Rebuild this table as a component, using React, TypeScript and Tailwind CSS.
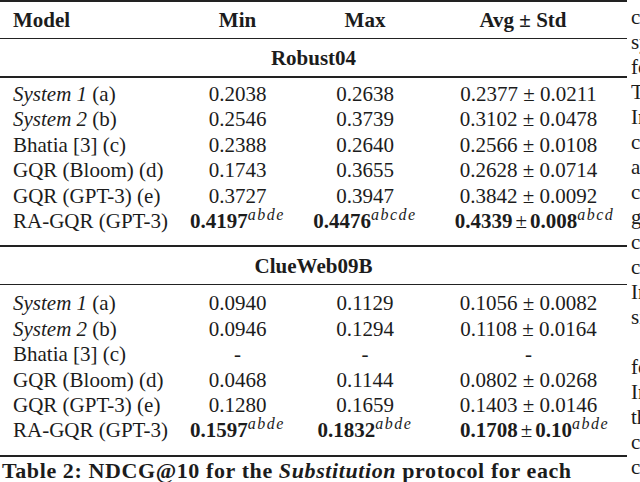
import React from 'react';

type Cell = React.ReactNode;

interface RowData {
  model: Cell;
  min: Cell;
  max: Cell;
  avg: Cell;
}

const GRID = 'grid grid-cols-[175px_125px_130px_197px]';

const Sup = ({ children }: { children: React.ReactNode }) => (
  <sup className="text-[16px] italic font-normal tracking-[1.5px] top-[-8px]">{children}</sup>
);

// the ± in the bold rows sits tighter than in the plain ones
const PM = () => <span className="font-normal px-[3px]">±</span>;

const robust: RowData[] = [
  { model: <><i>System 1</i> (a)</>, min: '0.2038', max: '0.2638', avg: '0.2377 ± 0.0211' },
  { model: <><i>System 2</i> (b)</>, min: '0.2546', max: '0.3739', avg: '0.3102 ± 0.0478' },
  { model: 'Bhatia [3] (c)', min: '0.2388', max: '0.2640', avg: '0.2566 ± 0.0108' },
  { model: 'GQR (Bloom) (d)', min: '0.1743', max: '0.3655', avg: '0.2628 ± 0.0714' },
  { model: 'GQR (GPT-3) (e)', min: '0.3727', max: '0.3947', avg: '0.3842 ± 0.0092' },
  {
    model: 'RA-GQR (GPT-3)',
    min: <b>0.4197<Sup>abde</Sup></b>,
    max: <b>0.4476<Sup>abcde</Sup></b>,
    avg: <b className="pl-[12px]">0.4339<PM />0.008<Sup>abcd</Sup></b>,
  },
];

const clueweb: RowData[] = [
  { model: <><i>System 1</i> (a)</>, min: '0.0940', max: '0.1129', avg: '0.1056 ± 0.0082' },
  { model: <><i>System 2</i> (b)</>, min: '0.0946', max: '0.1294', avg: '0.1108 ± 0.0164' },
  { model: 'Bhatia [3] (c)', min: '-', max: '-', avg: '-' },
  { model: 'GQR (Bloom) (d)', min: '0.0468', max: '0.1144', avg: '0.0802 ± 0.0268' },
  { model: 'GQR (GPT-3) (e)', min: '0.1280', max: '0.1659', avg: '0.1403 ± 0.0146' },
  {
    model: 'RA-GQR (GPT-3)',
    min: <b>0.1597<Sup>abde</Sup></b>,
    max: <b>0.1832<Sup>abde</Sup></b>,
    avg: <b className="pl-[12px]">0.1708<PM />0.10<Sup>abde</Sup></b>,
  },
];

// first letters of the neighbouring text column, cut off by the crop
const sideLines = [
  'could', 'system', 'for', 'The', 'In', 'can', 'are', 'can', 'gen', 'cor',
  'con', 'In', 'sim', '', 'for', 'In', 'the', 'can', 'con',
];

const DataRows = ({ rows, className }: { rows: RowData[]; className: string }) => (
  <div className={className}>
    {rows.map((r, i) => (
      <div key={i} className={`${GRID} h-[25.4px] leading-[25.4px] whitespace-nowrap`}>
        <div className="pl-[13px]">{r.model}</div>
        <div className="text-center">{r.min}</div>
        <div className="text-center">{r.max}</div>
        <div className="text-center">{r.avg}</div>
      </div>
    ))}
  </div>
);

export default function App() {
  return (
    <div className="w-[640px] h-[482px] overflow-hidden bg-white text-[#1c1c1c] font-['Liberation_Serif','Times_New_Roman',serif] text-[21px] flex">
      <div className="w-[627px] shrink-0">
        <div className="h-[2px] bg-[#222]" />
        <div className={`${GRID} pt-[6px] pb-[5px] leading-[25px] font-bold`}>
          <div className="pl-[13px]">Model</div>
          <div className="text-center">Min</div>
          <div className="text-center">Max</div>
          <div className="text-center pr-[11px]">Avg ± Std</div>
        </div>
        <div className="h-px bg-[#222]" />
        <div className="pt-[7px] pb-[5px] leading-[25px] font-bold text-center">Robust04</div>
        <div className="h-[2px] bg-[#222]" />
        <DataRows rows={robust} className="pt-[4px] pb-[11px]" />
        <div className="h-[1.5px] bg-[#222]" />
        <div className="pt-[7px] pb-[5px] leading-[25px] font-bold text-center">ClueWeb09B</div>
        <div className="h-[1.5px] bg-[#222]" />
        <DataRows rows={clueweb} className="pt-[6px] pb-[11px]" />
        <div className="h-[2px] bg-[#222]" />
        <div className="pl-[2px] pt-[3px] text-[22px] leading-[22px] font-bold tracking-[0.6px] whitespace-nowrap">
          Table 2: NDCG@10 for the <i>Substitution</i> protocol for each
        </div>
      </div>
      <div className="ml-[4px] flex-1 overflow-hidden pt-[5px] leading-[25px] whitespace-nowrap">
        {sideLines.map((w, i) => (
          <div key={i} className="h-[25px]">{w}</div>
        ))}
      </div>
    </div>
  );
}
